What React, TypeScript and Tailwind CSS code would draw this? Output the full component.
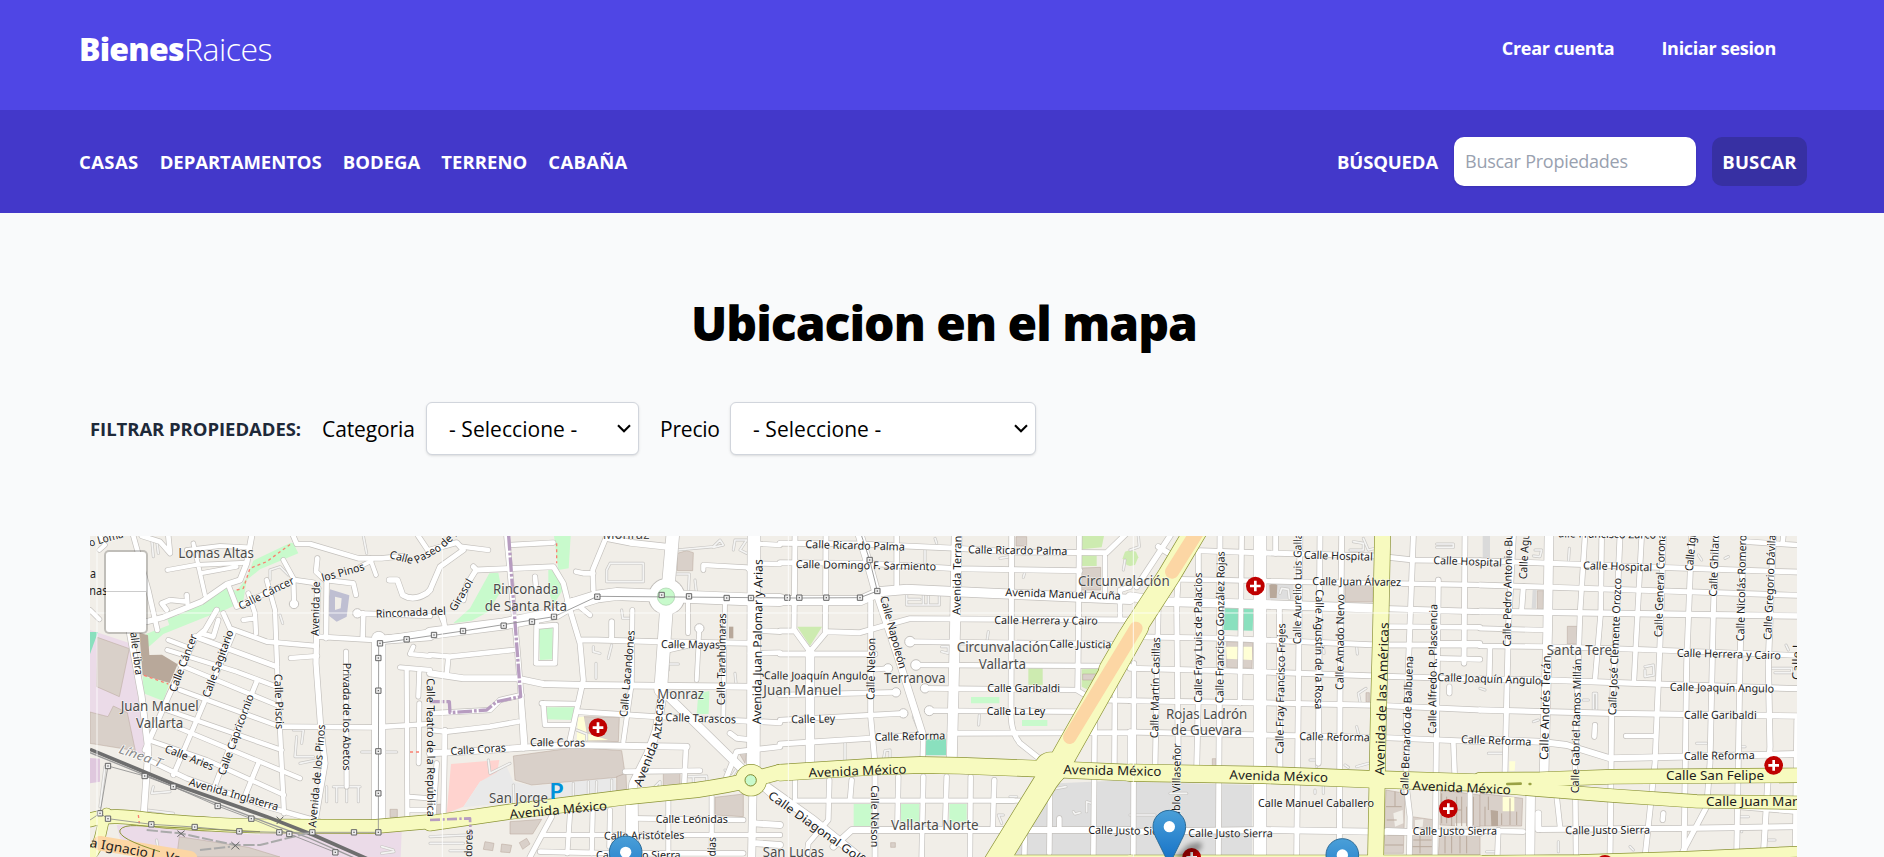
import React from "react";

type Pt = [number, number];
type Shape = { f: string; d: string };
/** text, baseline start x/y, baseline end x/y, font size */
type Label = [string, number, number, number, number, number];
type Tile = {
  areas: Shape[];
  minor: string[];
  roads: [number, string][];
  main: [number, string][];
  poles: Pt[];
  labels: Label[];
  hospitals: Pt[];
};

const PARK = "#c8facc";
const GRASS = "#cdebb0";
const BUILD = "#d9d0c9";
const INDUS = "#ebdbe8";
const PITCH = "#8ae0be";
const GREY = "#dedede";
const SCHOOL = "#ffffd6";
const LAND = "#f1eee8";

const tiles: Tile[] = [
  {
    areas: [
      { f: PARK, d: "M632 38L520 92L500 145L470 182L425 172L385 212L290 258L260 262L268 285L198 312L205 352L250 312L375 262L440 238L490 214L500 150L540 118L655 70L640 40Z" },
      { f: PARK, d: "M188 438L268 460L250 513L190 490Z" },
      { f: "#b8a89a", d: "M178 308L204 316L208 375L246 374L293 403L269 459L188 436Z" },
      { f: INDUS, d: "M30 300L150 340L205 680L165 665L30 630Z" },
      { f: BUILD, d: "M52 322L148 356L118 500L50 470Z" },
      { f: BUILD, d: "M30 546L84 560L100 528L142 548L166 662L30 640Z" },
      { f: PITCH, d: "M30 306L54 306L30 372Z" },
      { f: "#dfc8de", d: "M30 684L60 686L60 755L30 760Z" },
      { f: INDUS, d: "M110 885L550 915L560 981L230 981L120 925Z" },
      { f: INDUS, d: "M540 900L965 905L962 981L540 981Z" },
      { f: BUILD, d: "M298 920L505 952L600 981L290 981Z" },
      { f: "#bfbfd2", d: "M750 178L808 196L800 260L770 275L740 252Z" },
      { f: LAND, d: "M765 200L785 205L782 235L765 240Z" },
      { f: BUILD, d: "M930 838L952 838L952 862L930 862Z" },
    ],
    minor: [
      "M230 30L235 70", "M215 25L220 80", "M850 18L860 70", "M570 150L570 120L600 110L625 135", "M640 600L670 600L665 640", "M660 700L710 690", "M650 620L645 680L700 680",
      "M760 770L840 770M770 770L770 815M800 770L800 815M835 770L835 815M740 770L740 815", "M220 770L215 790L270 785", "M200 840L280 850M210 860L270 850", "M845 666L950 666", "M600 255L608 280", "M230 930L235 960", "M905 950L940 960M905 970L942 965", "M75 710L60 830",
    ],
    roads: [
      [14, "M160 18L205 180L232 300"], [14, "M185 18L240 35L270 70L265 18"], [12, "M60 18L75 45L58 60"], [14, "M640 18L650 42L690 42L835 85L905 85L970 78"], [12, "M870 85L888 135M875 92L840 110"],
      [12, "M262 120L345 105L500 98M340 40L375 195M362 130L470 110M320 60L420 48L500 52"], [16, "M515 18L500 100L480 150L440 163L365 215L250 262L200 275"],
      [14, "M445 165L470 230L645 150L700 158L715 175"], [14, "M260 240L245 220L270 210L320 215M320 195L322 220"], [13, "M30 240L58 268"], [13, "M610 90L640 145L642 215"], [13, "M560 150L585 240L592 430L612 850"],
      [13, "M505 190L525 250L528 310M490 270L525 265"], [14, "M712 85L708 125L735 150L820 160L828 195"], [14, "M740 150L738 325M712 320L880 330L1050 305"], [14, "M850 250L848 325M832 250L1050 258"], [16, "M928 150L952 150L968 195Q1000 215 1040 190L1050 180"], [14, "M1015 18L1050 70"],
      [15, "M410 240L375 300L345 325L265 500L195 660"], [14, "M370 312L400 320L415 270"], [14, "M430 250L450 295L560 335L710 348"], [13, "M632 384L712 378"], [15, "M345 320L590 410"], [13, "M265 330L330 355M262 360L470 425L590 470"],
      [13, "M300 405L590 525M300 480L600 590M260 540L605 660"], [13, "M275 585L660 745M205 630L380 690L612 795"], [14, "M460 310L380 500L280 735"], [14, "M530 455L430 700L400 780M535 700L490 810"],
      [18, "M148 300L185 500L205 660L190 870"], [16, "M712 180L708 400L722 590L735 700L700 905"], [14, "M605 590L880 592L1050 582"], [13, "M798 365L800 770"], [13, "M960 412L1050 420M1018 420L1015 500M1018 520L1016 700M980 420L982 860M982 800L1050 805M985 840L1050 840"],
      [40, "M896 325L896 880"], [26, "M896 330L1050 318"], [14, "M205 690L320 745L560 830L720 875"], [13, "M1000 350L990 372L1050 378"],
    ],
    main: [[40, "M30 870C90 850 170 865 240 872S480 888 550 888L880 890L1050 875"], [30, "M80 850C60 890 70 930 30 981"]],
    poles: [[900, 340], [980, 328], [895, 384], [895, 482], [895, 664], [895, 790], [895, 907], [822, 907], [697, 907], [628, 912], [598, 907], [478, 904], [344, 891], [214, 883], [84, 866], [60, 850], [84, 708], [194, 738], [280, 770], [413, 828], [514, 866], [766, 967]],
    labels: [
      ["o Loma", 30, 50, 132, 22, 33], ["Lomas Altas", 295, 84, 522, 84, 41], ["Calle Cáncer", 482, 240, 645, 160, 33], ["Avenida de", 716, 318, 720, 155, 33], ["los Pinos", 728, 155, 855, 120, 33], ["Calle", 927, 84, 996, 102, 33], ["Paseo", 1010, 102, 1086, 60, 33], ["de la", 1092, 54, 1146, 4, 33],
      ["Rinconada del", 888, 263, 1098, 254, 33], ["a", 30, 145, 48, 145, 38], ["nas", 28, 196, 82, 196, 38], ["alle Libra", 151, 308, 166, 436, 33], ["Calle Cáncer", 288, 488, 352, 318, 33], ["Calle Sagitario", 388, 505, 461, 305, 33],
      ["Calle Capricornio", 434, 738, 522, 498, 33], ["Calle Piscis", 583, 432, 588, 598, 33], ["Privada de los Abetos", 788, 398, 788, 722, 33], ["Juan Manuel", 122, 544, 356, 544, 41], ["Vallarta", 168, 595, 310, 595, 41],
      ["Calle Aries", 252, 665, 396, 722, 33], ["Avenida Inglaterra", 325, 766, 592, 842, 33], ["Avenida de los Pinos", 708, 893, 736, 585, 33], ["Calle Teatro de la República", 1040, 445, 1042, 860, 33], ["a Ignacio L. Va", 28, 950, 300, 1000, 38],
    ],
    hospitals: [],
  },
  {
    areas: [
      { f: PARK, d: "M178 130L205 128L215 180L175 245L125 272L70 280L120 235Z" }, { f: PARK, d: "M372 18L422 18L416 115L385 120Z" }, { f: PARK, d: "M355 115L380 118L398 180L370 225L355 180Z" },
      { f: PARK, d: "M325 292L368 290L368 388L330 390Z" }, { f: PARK, d: "M350 532L433 532L425 570L350 568Z" }, { f: PARK, d: "M805 490L838 483L836 552L800 552Z" },
      { f: BUILD, d: "M742 70L770 62L790 68L788 122L742 122Z" }, { f: "#ffd3cf", d: "M63 702L208 690L200 735L150 755L100 830L50 850Z" }, { f: "#e9e9e9", d: "M150 755L230 710L250 755L310 768L555 742L560 785L100 832Z" },
      { f: BUILD, d: "M250 678L440 652L575 662L585 730L560 742L305 765L255 750Z" }, { f: BUILD, d: "M462 560L568 562L565 635L465 632Z" }, { f: SCHOOL, d: "M444 562L462 560L470 610L535 630L440 632Z" }, { f: BUILD, d: "M700 718L750 718L750 772L700 772Z" },
      { f: BUILD, d: "M240 875L335 868L308 912L240 912Z" }, { f: BUILD, d: "M855 802L940 792L940 860L855 855Z" }, { f: BUILD, d: "M925 665L950 665L945 700Z" }, { f: "#b8a89a", d: "M897 290L910 290L910 325L897 325Z" },
      { f: BUILD, d: "M165 935L192 940L188 962L160 958ZM215 942L245 946L240 968L212 966ZM268 938L290 925L300 942L278 958Z" }, { f: BUILD, d: "M560 740L588 730L590 785L560 790Z" }, { f: BUILD, d: "M0 825L42 822L45 850L0 855Z" },
    ],
    minor: [
      "M540 100L640 100L640 155L530 155L530 120L540 100", "M740 60L850 50L870 30L880 45L850 52", "M910 60L915 30L950 30L930 60L950 70", "M575 240L578 265L605 265", "M740 132L778 132L775 195", "M795 150L800 195L830 195", "M490 350L490 365L510 370M545 345L535 385M498 400L498 445", "M715 402L745 402M915 430L918 460M715 390L715 420",
      "M175 690L180 730L240 700", "M430 760L430 820M475 755L475 815M500 755L498 815M545 750L545 812M250 765L252 835", "M775 740L830 738L832 770M790 740L790 770", "M0 920L110 915M0 940L100 940M60 962L110 962", "M675 770L690 755L690 790", "M440 600L470 612L470 630", "M885 720L905 740L918 720",
    ],
    roads: [
      [15, "M0 180L30 110L100 60L80 38L0 60"], [13, "M95 50L175 60"], [14, "M240 45L370 38"], [15, "M130 110L140 120L370 110L400 160L420 240L450 340L460 450L420 630"], [15, "M135 125L110 165L100 210"], [14, "M315 140L318 170"], [15, "M230 18L262 360L285 640"],
      [14, "M530 18L488 120L490 180"], [14, "M438 125L460 130L490 130"], [18, "M535 25L600 38L710 50"], [38, "M728 18L712 200L692 480"], [36, "M420 225L500 200L560 192L950 208L1050 210"], [34, "M0 310L220 282L380 250L430 220"],
      [14, "M452 232L480 255"], [13, "M820 120L820 105L950 112L970 130M960 40L1050 45M960 100L1050 102"], [38, "M972 18L970 720"], [22, "M970 720L965 981"], [13, "M30 250L50 300M40 260L45 290"], [14, "M320 270L318 400L375 400L378 285M320 290L375 285"],
      [14, "M0 375L60 380L250 360M55 380L50 435"], [18, "M0 430L100 445L260 445L340 462L460 465L960 470"], [15, "M455 330L500 330L690 335L960 340M545 275L545 330"], [13, "M607 240L605 460L580 635"], [12, "M774 215L774 310M808 295L800 450M885 215L880 560"], [14, "M695 365L780 345M960 300L1050 305M960 370L1050 368"],
      [14, "M0 550L180 540L210 510L275 495"], [14, "M50 605L180 590L265 575M340 520L345 585L430 585M335 520L445 522"], [14, "M0 600L50 605"], [15, "M445 545L680 560L1050 578"], [18, "M0 670L100 665L250 655L410 645L770 650"], [24, "M700 480L680 600L655 670L610 760L605 800"], [24, "M715 500L960 740"], [15, "M900 610L920 625L970 630M1050 650L920 665L890 740"], [14, "M768 650L762 780"],
      [14, "M585 725L810 722"], [14, "M280 655L272 500"], [36, "M605 795L607 981"], [14, "M607 865L940 870M340 915L1050 915M330 965L560 970M610 970L940 970"], [15, "M365 860L300 981"], [13, "M420 850L412 970M488 845L485 970M540 840L538 950M715 800L715 970M845 800L845 970"], [14, "M20 700L10 860M45 600L40 860"], [18, "M970 880L1050 885M980 940L1050 945"], [20, "M1000 770L1050 815"],
    ],
    main: [[44, "M0 880L240 845L600 800L800 780Q900 765 960 750L1050 726"], [92, "M963 750L963 751"]],
    poles: [[12, 315], [99, 303], [221, 287], [306, 275], [372, 260], [502, 200], [695, 195], [777, 199], [890, 204], [963, 204]],
    labels: [
      ["Girasol", 76, 246, 130, 155, 33], ["Monraz", 518, 26, 658, 26, 41], ["Rinconada", 189, 192, 385, 192, 41], ["de Santa Rita", 164, 243, 411, 243, 41], ["Calle Mayas", 693, 354, 870, 356, 33],
      ["Calle Lacandones", 592, 562, 614, 302, 33], ["Calle Tarahumaras", 884, 526, 888, 250, 33], ["Avenida Juan Palomar y Arias", 993, 583, 998, 88, 36], ["Monraz", 682, 506, 822, 506, 41], ["Calle Tarascos", 706, 573, 918, 580, 33],
      ["Avenida", 634, 772, 686, 640, 36], ["Aztecas", 692, 628, 702, 506, 36], ["Calle Coras", 62, 675, 228, 664, 33], ["Calle Coras", 300, 648, 465, 650, 33], ["San Jorge", 177, 818, 354, 818, 41], ["Avenida México", 240, 866, 532, 840, 38], ["Calle Leónidas", 677, 880, 894, 880, 33],
      ["Calle Aristóteles", 522, 929, 763, 927, 33], ["Calle Justo Sierra", 498, 986, 752, 986, 33], ["dores", 126, 981, 128, 900, 33], ["idias", 856, 987, 858, 922, 33], ["Calle Diagonal Golf", 1012, 802, 1290, 1000, 35], ["Calle Joaquín Angulo", 1002, 448, 1314, 449, 33], ["Juan Manuel", 1000, 495, 1234, 495, 41], ["San Lucas", 998, 982, 1182, 982, 41],
    ],
    hospitals: [[504, 593]],
  },
  {
    areas: [
      { f: GRASS, d: "M52 290L126 290L90 348Z" }, { f: GRASS, d: "M905 18L972 18L965 52L905 58ZM905 76L950 76L950 108L905 108Z" }, { f: GRASS, d: "M1050 60L1035 65L1028 85L1040 105L1050 108Z" }, { f: GRASS, d: "M745 415L788 415L788 465L745 465ZM905 418L962 416L920 478L905 470Z" },
      { f: PITCH, d: "M437 628L498 626L498 676L437 676Z" }, { f: PARK, d: "M573 501L658 501L658 520L573 520ZM726 570L802 570L802 588L726 588Z" }, { f: PARK, d: "M221 822L275 822L275 888L221 888ZM363 822L418 822L418 875L363 875ZM508 822L560 822L560 875L508 875Z" },
      { f: BUILD, d: "M708 20L740 20L740 48L708 48ZM905 114L962 112L962 180L905 180ZM908 432L955 432L945 450L908 450ZM332 938L346 938L346 952L332 952Z" }, { f: GREY, d: "M835 760L1050 750L1050 981L690 981Z" }, { f: BUILD, d: "M975 470L992 455L992 500L970 500Z" },
    ],
    minor: ["M380 195L380 225L478 225L478 195M380 208L420 208M430 195L430 225M445 195L445 225", "M435 60L435 110L450 115", "M465 25L470 40", "M735 125L730 142", "M660 85L690 80", "M625 305L620 340", "M485 350L505 350L505 370L485 365", "M598 555L596 585", "M195 640L195 690", "M310 690L315 662L330 660L330 690", "M805 780L858 770M880 845L885 852L900 848M920 845L920 815L935 820", "M665 880L655 855L670 855", "M690 800L710 800", "M400 560L412 590", "M1030 120L1035 90"],
    roads: [
      [15, "M0 40L240 42L530 55L700 66L980 68L1050 0"], [15, "M0 98L260 100L530 116L900 122"], [28, "M0 212L240 212L300 185L380 178L640 190L1050 208"], [15, "M0 303L45 303L90 365L140 305L240 308L320 285L390 266L1050 270"], [15, "M0 372L285 372"], [14, "M395 335L1000 342"], [14, "M408 405L1050 408"], [14, "M430 475L890 480L940 510L1050 512"], [14, "M450 542L890 545"], [15, "M510 610L1050 608"], [13, "M285 418L325 415"],
      [14, "M0 495L345 487"], [14, "M0 570L370 550"], [15, "M0 642L270 625L430 615"], [15, "M45 18L42 300M138 18L136 305"], [26, "M90 365L90 695"], [24, "M240 18L262 90L290 190"], [20, "M290 190L360 400L430 620"], [15, "M272 215L272 560L285 700L285 981"], [14, "M350 18L350 175"], [30, "M530 18L525 300L515 700"], [15, "M695 18L693 560Q695 610 720 640L790 695"], [15, "M898 18L894 420L893 475"], [14, "M945 500L940 981"], [14, "M1005 460L1003 720M880 660L875 730"], [14, "M975 80L975 200M1020 270L1020 180L1050 170"],
      [14, "M430 615L428 690"], [13, "M45 750L45 812L720 812"], [14, "M148 750L145 870L85 940L80 981"], [14, "M215 750L210 810M355 740L352 900M430 740L425 981M500 740L495 900M572 740L570 981M643 750L638 900"], [18, "M160 950L215 900L640 900L1050 900"], [24, "M-40 770L100 870L260 1000"], [14, "M810 780L808 970M735 900L733 981M640 812L700 812M838 865L838 900"],
    ],
    main: [[48, "M0 728L280 710L420 705L540 707L820 718L1050 728"], [70, "M1070 290L845 690L800 750L640 1010"], [28, "M640 990L1050 990"]],
    poles: [[22, 203], [58, 203], [139, 203], [240, 203], [292, 183], [269, 90]],
    labels: [
      ["Calle Ricardo Palma", 76, 54, 374, 62, 33], ["Calle Domingo F. Sarmiento", 47, 114, 468, 121, 33], ["Avenida Terranov", 541, 255, 545, -20, 33], ["Calle Ricardo Palma", 564, 70, 862, 75, 33], ["Avenida Manuel Acuña", 676, 198, 1022, 209, 33], ["Circunvalación", 894, 168, 1169, 168, 41],
      ["Calle Herrera y Cairo", 643, 282, 953, 284, 33], ["Calle Napoleón", 300, 202, 358, 418, 33], ["Calle Nelson", 283, 510, 286, 324, 33], ["Circunvalación", 530, 367, 805, 367, 41], ["Vallarta", 596, 418, 738, 418, 41], ["Calle Justicia", 808, 353, 994, 355, 33],
      ["Terranova", 312, 459, 497, 459, 41], ["Calle Garibaldi", 622, 487, 840, 487, 33], ["Calle La Ley", 620, 556, 796, 556, 33], ["Calle Ley", 34, 580, 166, 577, 33], ["Calle Reforma", 284, 633, 496, 628, 33], ["Avenida México", 86, 742, 380, 730, 38], ["Avenida México", 850, 732, 1144, 738, 38],
      ["Calle Nelson", 273, 766, 273, 952, 33], ["Vallarta Norte", 333, 901, 596, 901, 41], ["Calle Justo Sierra", 925, 911, 1178, 916, 33],
    ],
    hospitals: [],
  },
  {
    areas: [
      { f: GRASS, d: "M0 60L18 65L25 82L15 105L0 108Z" }, { f: PITCH, d: "M285 234L370 236L368 302L280 300Z" }, { f: BUILD, d: "M290 335L368 338L366 415L290 412Z" }, { f: SCHOOL, d: "M288 350L366 350L366 390L290 386Z" }, { f: GREY, d: "M412 156L490 156L490 208L412 208Z" }, { f: "#b8a89a", d: "M418 165L430 158L442 165L440 204L420 204Z" },
      { f: BUILD, d: "M645 164L730 164L728 216L645 216Z" }, { f: GREY, d: "M0 755L367 765L366 981L0 981Z" }, { f: BUILD, d: "M768 780L825 790L820 970L760 970ZM845 860L915 870L908 975L840 975ZM932 780L1050 795L1050 890L930 885ZM930 905L1050 905L1050 975L925 975Z" }, { f: LAND, d: "M790 850L818 840L820 880L795 890ZM855 870L880 868L878 890L855 892ZM975 880L1010 880L1010 900L975 900Z" }, { f: BUILD, d: "M247 686L258 686L258 710L247 710ZM708 488L718 488L718 516L708 516Z" },
    ],
    minor: ["M660 60L700 60L700 40L670 35M700 25L715 60L735 55", "M920 42L970 42L970 52L920 52", "M450 190L455 175L475 178L478 205", "M680 350L682 372M580 345L582 370", "M540 690L560 690L560 710M680 590L685 610M645 705L655 712M680 710L715 700", "M555 780L555 790M580 765L580 790", "M0 855L75 855", "M120 790L170 790", "M685 490L690 516M708 475L685 490", "M25 18L28 50L0 60"],
    roads: [
      [16, "M120 18L20 170M85 50L140 85"], [15, "M210 62L440 70L740 78L850 90L1050 92"], [14, "M150 148L270 150L480 155L1050 165"], [26, "M0 200L110 215L460 225L740 235"], [16, "M740 235L1050 245"], [15, "M0 320L280 325L740 345L1050 345"], [15, "M0 415L280 422L740 438L1050 448"], [15, "M0 512L380 518L740 526L1050 540"], [15, "M0 606L400 615L740 622L1050 635"],
      [14, "M780 290L1050 292M925 385L1050 388M925 340L1050 340"], [14, "M85 235L75 730"], [15, "M148 90L140 220L145 700"], [15, "M205 65L205 500L200 720"], [15, "M270 18L268 500L265 981"], [14, "M335 18L330 500M330 420L330 520"], [38, "M390 18L390 981"], [15, "M448 230L450 725M437 18L437 70"], [15, "M510 18L505 500L500 981"], [15, "M570 18L565 700"], [15, "M635 18L630 500L628 981"], [15, "M850 18L840 280L828 600L828 760L840 860L838 981"], [15, "M925 150L915 981"], [15, "M1005 18L1002 400"], [14, "M970 635L975 760"],
      [14, "M958 470L958 490"], [18, "M0 905L400 900L740 905L1050 908"], [14, "M12 400L10 981"], [14, "M0 605L0 700"], [14, "M1020 760L1020 905"], [16, "M770 902L840 905"],
    ],
    main: [[50, "M0 728L400 735L730 748L1050 758"], [46, "M758 0L752 300L745 560L737 981"], [66, "M210 -20L118 135L-5 325L-60 420"], [28, "M0 990L1050 990"]],
    poles: [],
    labels: [
      ["Calle Martín Casillas", 84, 625, 90, 322, 33], ["Calle Fray Luis de Palacios", 215, 518, 215, 128, 33], ["Calle Francisco González Rojas", 280, 520, 284, 64, 33], ["Calle Aurelio Luis Galla", 513, 343, 515, 10, 33], ["Calle Hospital", 521, 86, 728, 92, 33], ["Calle Hospital", 910, 102, 1115, 110, 33], ["Calle Juan Álvarez", 547, 165, 813, 168, 33],
      ["Calle Agustín de la Rosa", 557, 178, 555, 538, 33], ["Calle Amado Nervo", 640, 480, 643, 192, 33], ["Calle Fray Francisco Frejes", 460, 672, 466, 280, 33], ["Avenida de las Américas", 762, 736, 776, 278, 38], ["Calle Alfredo R. Plascencia", 918, 612, 922, 222, 33], ["Calle Bernardo de Balbuena", 834, 798, 850, 378, 33], ["Calle Joaquín Angulo", 922, 453, 1234, 463, 33],
      ["Rojas Ladrón", 108, 566, 352, 566, 41], ["de Guevara", 123, 616, 336, 616, 41], ["Calle Reforma", 508, 630, 719, 634, 33], ["Calle Reforma", 993, 639, 1204, 647, 33], ["Avenida México", 298, 748, 594, 756, 38], ["Calle Manuel Caballero", 384, 832, 732, 832, 33], ["Pablo Villaseñor", 150, 880, 152, 640, 33], ["Calle Justo Sierra", 175, 921, 428, 922, 33], ["Avenida México", 847, 780, 1142, 793, 38], ["Calle Justo Sierra", 848, 915, 1101, 914, 33],
    ],
    hospitals: [[376, 168], [955, 836], [185, 982]],
  },
  {
    areas: [{ f: BUILD, d: "M262 289L292 289L290 342L262 342ZM172 182L190 182L190 238L172 238Z" }, { f: BUILD, d: "M0 790L128 805L125 888L0 888Z" }, { f: SCHOOL, d: "M68 800L103 802L103 844L68 844ZM88 694L106 694L104 722L88 722Z" }, { f: "#b8a89a", d: "M32 840L54 843L54 888L34 888Z" }, { f: "#dadada", d: "M8 18L30 18L30 84L8 84ZM158 180L170 180L168 235L155 235Z" }],
    minor: ["M268 55L265 100", "M165 60L185 60L180 80L160 78", "M495 410L520 405L522 435L495 440L495 420", "M340 490L350 490L350 540L340 540L340 490", "M310 510L325 510", "M875 415L935 415L935 428L885 428", "M918 345L925 360", "M650 640L680 640M780 650L795 650", "M770 860L805 860M785 890L785 905M865 930L885 930", "M235 935L235 965M450 950L460 960", "M160 575L175 570", "M20 965L45 965M25 670L75 670", "M655 75L665 90M735 85L745 80", "M0 475L15 480"],
    roads: [
      [15, "M0 92L210 100L530 112L950 126"], [15, "M0 165L215 172L530 182L950 196"], [17, "M0 244L950 258"], [13, "M0 295L190 300"], [14, "M0 348L200 350L470 358L950 376"], [16, "M0 447L200 450L470 460L950 476"], [16, "M0 540L400 550L950 558"], [18, "M0 628L180 635L260 645L390 685L950 672"], [16, "M180 898L600 895L950 890"], [14, "M30 350L28 445"],
      [15, "M100 18L85 300L75 725"], [15, "M130 170L125 240"], [26, "M207 18L203 300L192 740"], [26, "M152 790L150 981"], [14, "M315 18L300 250L285 700L288 981"], [14, "M365 18L362 250L345 450"], [15, "M420 18L410 250L395 560L390 981"], [14, "M485 18L470 300L462 450"], [15, "M550 18L540 340L525 700L495 981"], [15, "M635 18L620 400L612 981"], [15, "M708 18L700 250L690 700L680 830L600 981"], [15, "M790 18L780 400L770 981"], [16, "M880 18L865 400L870 650L850 981"], [14, "M950 570L945 981M910 18L908 40M800 35L950 45"],
      [14, "M345 585L343 620M438 618L520 618"], [14, "M550 850L548 870"], [14, "M55 900L52 981M230 800L240 890"], [14, "M770 830L950 845"], [18, "M175 898L175 850"], [14, "M0 902L130 905"],
    ],
    main: [[42, "M0 749L180 748L400 740L950 736"], [38, "M0 765L180 780L400 797L560 808L650 814L950 818"], [30, "M0 992L300 990L620 980L950 965"]],
    poles: [],
    labels: [
      ["Calle Pedro Antonio Bu", 92, 350, 97, 10, 33], ["Calle Agu", 140, 148, 148, 10, 33], ["alle Francisco Zarco", 235, 22, 528, 26, 33], ["Calle Hospital", 309, 118, 516, 124, 33], ["Calle General Corona", 546, 322, 556, 10, 33], ["Calle Igna", 638, 124, 650, -12, 33], ["Calle Ghilardi", 710, 200, 718, -2, 33], ["Calle Nicolás Romero", 792, 334, 799, 14, 33], ["Calle Gregorio Dávila", 874, 330, 887, 14, 33],
      ["Calle José Clemente Orozco", 408, 556, 424, 144, 33], ["Santa Tere", 200, 374, 396, 374, 41], ["Calle Andrés Terán", 204, 690, 212, 376, 36], ["Calle Gabriel Ramos Millán", 296, 790, 304, 386, 33], ["Calle Herrera y Cairo", 590, 380, 902, 388, 33], ["Calle Joaquín Angulo", 569, 482, 882, 488, 33], ["Calle Garibaldi", 612, 566, 830, 567, 33],
      ["Calle Reforma", 612, 690, 824, 687, 33], ["Calle San Felipe", 558, 751, 852, 751, 38], ["Calle Juan Manuel", 678, 828, 1020, 828, 38], ["Calle Justo Sierra", 256, 913, 510, 911, 33], ["Calle L", 960, 450, 962, 335, 33],
    ],
    hospitals: [[881, 706], [375, 1003]],
  },
];

const TILE_WIDTH = 1050;
const at = (i: number) => `translate(${i * TILE_WIDTH} 0)`;

function StreetLabel({ l }: { l: Label }) {
  const [text, x1, y1, x2, y2, size] = l;
  const angle = (Math.atan2(y2 - y1, x2 - x1) * 180) / Math.PI;
  return (
    <text
      transform={`translate(${x1} ${y1}) rotate(${angle})`}
      fontSize={size}
      textLength={Math.hypot(x2 - x1, y2 - y1)}
      lengthAdjust="spacingAndGlyphs"
      fill={size === 41 ? "#4c4c4a" : "#1c1c1c"}
      stroke="#ffffff"
      strokeOpacity={0.6}
      strokeWidth={size === 38 ? 0 : 4}
      paintOrder="stroke"
    >
      {text}
    </text>
  );
}

function Hospital({ p }: { p: Pt }) {
  return (
    <g transform={`translate(${p[0]} ${p[1]})`}>
      <circle r="28" fill="#bf0000" />
      <path d="M0 -16V16M-16 0H16" stroke="#fff" strokeWidth="8" />
    </g>
  );
}

function Pin({ x, y }: { x: number; y: number }) {
  return (
    <g transform={`translate(${x} ${y})`}>
      <path d="M0 160L55 105Q110 85 95 115Q80 140 0 166Z" fill="#000" opacity="0.35" filter="url(#soft)" />
      <path d="M0 1C28 1 49 23 49 50C49 66 43 77 36 91L0 164L-36 91C-43 77 -49 66 -49 50C-49 23 -28 1 0 1Z" fill="url(#pin)" stroke="#2e6c97" strokeWidth="3" />
      <circle cy="50" r="17" fill="#fff" />
    </g>
  );
}

const T = tiles.map((t, i) => ({ ...t, i }));

function CityMap() {
  return (
    <svg className="block h-[321px] w-full font-['Noto_Sans',sans-serif]" viewBox="30 18 5121 963" preserveAspectRatio="none" fill="none" strokeLinejoin="round">
      <defs>
        <linearGradient id="pin" x1="0" y1="0" x2="0" y2="1">
          <stop offset="0" stopColor="#4a9fd8" />
          <stop offset="1" stopColor="#126fc6" />
        </linearGradient>
        <filter id="soft" x="-50%" y="-50%" width="200%" height="200%">
          <feGaussianBlur stdDeviation="8" />
        </filter>
      </defs>
      <rect x="0" y="0" width="5200" height="1000" fill={LAND} />
      {T.map(t => <g key={t.i} transform={at(t.i)}>{t.areas.map((a, k) => <path key={k} d={a.d} fill={a.f} stroke="#b9a99c" strokeOpacity={a.f === BUILD ? 0.8 : 0} strokeWidth="2" />)}</g>)}
      <path d="M3918 830H3965M3920 870H3950M3922 915H3970M3915 945H3970M3945 785V830M4000 930H4055M3995 950H4060M4020 910V970M4085 790V880M4100 800V880M4115 810V888M4130 800V888M4145 800V888M4160 830V888M4180 800V885M4215 830V888M4225 800V840M4290 805V885M4310 845V885M4265 850V885M4083 840H4145M4095 910V970M4115 910V970M4140 910V970M4160 910V970" stroke="#b9a99c" strokeWidth="3" />
      {T.map(t => <g key={t.i} transform={at(t.i)} strokeLinecap="round">{t.minor.map((d, k) => <g key={k}><path d={d} stroke="#c9c7c4" strokeWidth="9" /><path d={d} stroke="#f4f4f3" strokeWidth="5" /></g>)}</g>)}
      {T.map(t => <g key={t.i} transform={at(t.i)} stroke="#c4c1bd" strokeLinecap="round">{t.roads.map(([w, d], k) => <path key={k} d={d} strokeWidth={w + 4} />)}</g>)}
      <circle cx="1760" cy="200" r="54" stroke="#c4c1bd" strokeWidth="4" />
      <g fill="#fff" stroke="#c4c1bd" strokeWidth="3">
        <circle cx="2424" cy="415" r="14" /><circle cx="2448" cy="487" r="14" /><circle cx="2470" cy="550" r="14" /><circle cx="2490" cy="335" r="16" /><circle cx="2508" cy="405" r="16" /><circle cx="2535" cy="475" r="14" /><circle cx="2548" cy="542" r="15" /><circle cx="642" cy="222" r="14" /><circle cx="832" cy="250" r="14" /><circle cx="1858" cy="295" r="14" />
      </g>
      {T.map(t => <g key={t.i} transform={at(t.i)} stroke="#fff" strokeLinecap="round">{t.roads.map(([w, d], k) => <path key={k} d={d} strokeWidth={w} />)}</g>)}
      <circle cx="1760" cy="200" r="53" fill="#fff" />
      <circle cx="1758" cy="200" r="26" fill="#c8facc" stroke="#a5cfa8" strokeWidth="2" />

      {T.map(t => <g key={t.i} transform={at(t.i)} stroke="#8c9436" strokeLinecap="round">{t.main.map(([w, d], k) => <path key={k} d={d} strokeWidth={w + 4} />)}</g>)}
      <circle cx="2912" cy="715" r="50" fill="#8c9436" />
      {T.map(t => <g key={t.i} transform={at(t.i)} stroke="#f7fabf" strokeLinecap="round">{t.main.map(([w, d], k) => <path key={k} d={d} strokeWidth={w} />)}</g>)}
      <circle cx="2912" cy="715" r="48" fill="#f7fabf" />
      <circle cx="2012" cy="751" r="17" fill="#c8facc" stroke="#7f8a33" strokeWidth="3" />
      <g stroke="#fcd6a4" strokeLinecap="round">
        <path d="M3355 0L3276 125" strokeWidth="42" />
        <path d="M3168 295L2969 622" strokeWidth="40" />
        <path d="M60 940L180 960L330 985" strokeWidth="44" />
      </g>
      <path d="M120 900Q130 885 170 887L540 905M120 900Q110 925 240 965" stroke="#8c9436" strokeWidth="3" />
      <path d="M4282 762L4322 761M4349 762L4351 762" stroke="#9aa245" strokeWidth="8" strokeLinecap="round" />

      <path d="M1286 18L1312 370L1322 500L1250 515L1220 540L1110 548L1108 515L1050 515" stroke="#b79cc0" strokeWidth="10" strokeDasharray="44 6 8 6" />
      <path d="M1050 870L1170 865L1172 920" stroke="#b79cc0" strokeWidth="8" strokeDasharray="30 7 7 7" />
      <path d="M470 180L490 175L510 115L560 95L632 42M192 436L265 462M990 666L1025 666M1430 40L1430 100M175 855L178 880" stroke="#fa8072" strokeWidth="4" strokeDasharray="9 9" />
      <path d="M30 658L280 762L560 860L700 915L870 990" stroke="#6e6e6e" strokeWidth="11" />
      <path d="M30 668L300 778L560 878L690 925L860 1000" stroke="#9b9b9b" strokeWidth="4" />
      <path d="M200 900L300 910L465 945L540 945L600 930L690 908M360 960L450 950" stroke="#aaa" strokeWidth="6" strokeDasharray="34 8" />
      <path d="M292 902L314 920M314 902L292 920M454 936L478 958M478 936L454 958M590 860L610 882M610 860L590 882" stroke="#666" strokeWidth="3" />
      <g stroke="#8d8d8d" strokeWidth="2.5">
        <path d="M895 907L896 340L980 328L1149 303L1422 260L1552 199L2150 204L2340 203L2392 183L2369 90L2345 18" />
        <path d="M60 850L84 866L214 883L344 891L478 904L598 907L895 907M30 870L60 850L84 708L194 738L280 770L413 828L514 866L628 912L766 967" />
      </g>
      {T.map(t => <g key={t.i} transform={at(t.i)}>{t.poles.map(([x, y], k) => <g key={k}><rect x={x - 8} y={y - 8} width="16" height="16" fill="#eee" stroke="#666" strokeWidth="3" /><rect x={x - 2} y={y - 2} width="4" height="4" fill="#666" /></g>)}</g>)}

      <path d="M0 249H5200M51 0V1000M1087 0V1000M2125 0V1000M3160 0V1000" stroke="#fff" strokeWidth="3" opacity="0.8" />

      {T.map(t => <g key={t.i} transform={at(t.i)}>{t.labels.map((l, k) => <StreetLabel key={k} l={l} />)}</g>)}
      <text transform="translate(114 668) rotate(19)" fontSize="37" textLength="135" lengthAdjust="spacingAndGlyphs" fontStyle="italic" fill="#8a8a8a" stroke="#fff" strokeWidth="4" paintOrder="stroke">Línea T</text>
      <text x="1408" y="806" fontSize="64" textLength="44" lengthAdjust="spacingAndGlyphs" fontWeight="600" fill="#0092da">P</text>
      {T.map(t => <g key={t.i} transform={at(t.i)}>{t.hospitals.map((p, k) => <Hospital key={k} p={p} />)}</g>)}
      <Pin x={1637} y={917} />
      <Pin x={3268} y={840} />
      <Pin x={3787} y={925} />
    </svg>
  );
}

function Chevron() {
  return (
    <svg className="h-[9px] w-[14px]" viewBox="0 0 14 9" fill="none" stroke="#000" strokeWidth="2.1">
      <path d="M1 1.2L7 7.2L13 1.2" />
    </svg>
  );
}

function Picker({ label, labelClass, boxClass }: { label: string; labelClass: string; boxClass: string }) {
  return (
    <label className="flex items-center text-[21px] text-black">
      <span className={`pt-[2px] ${labelClass}`}>{label}</span>
      <button className={`flex h-[53px] items-center justify-between rounded-md border border-gray-300 bg-white pr-[7px] pl-[22px] shadow ${boxClass}`}>
        <span className="pt-[2px] tracking-[0.05px] whitespace-pre">- Seleccione -</span>
        <span className="pb-[1px]"><Chevron /></span>
      </button>
    </label>
  );
}

export default function App() {
  return (
    <div className="h-[857px] overflow-hidden bg-gray-50 font-['Open_Sans','Noto_Sans',sans-serif]">
      <header className="flex h-[110px] justify-between bg-[#4f46e5] pr-[108px] pl-[79px] text-white">
        <h1 className="flex h-[98px] items-center text-[32px] leading-none whitespace-nowrap">
          <span className="w-[105px] font-black tracking-[-0.8px]">Bienes</span>
          <span className="font-[350] tracking-[-0.5px]">Raices</span>
        </h1>
        <nav className="flex h-[96px] items-center gap-[47px] text-[18px] font-bold tracking-[-0.3px]">
          <a>Crear cuenta</a>
          <a>Iniciar sesion</a>
        </nav>
      </header>

      <div className="flex h-[103px] items-center justify-between bg-[#4338ca] pr-[77px] pl-[79px] text-[18.5px] font-bold text-white">
        <nav className="flex gap-[21px]">
          <a className="tracking-[0.4px]">CASAS</a>
          <a className="tracking-[-0.05px]">DEPARTAMENTOS</a>
          <a className="tracking-[0.05px]">BODEGA</a>
          <a className="tracking-[0.05px]">TERRENO</a>
          <a className="tracking-[0.3px]">CABAÑA</a>
        </nav>
        <form className="flex items-center gap-4">
          <span className="tracking-[-0.15px]">BÚSQUEDA</span>
          <div className="flex h-[49px] w-[242px] items-center rounded-[10px] bg-white px-[11px] text-[18px] font-normal tracking-[-0.25px] text-gray-400 shadow-sm">Buscar Propiedades</div>
          <button type="button" className="h-[49px] w-[95px] rounded-[10px] bg-[#3730a3] tracking-[0.15px]">BUSCAR</button>
        </form>
      </div>

      <main className="pt-[77px] pr-[87px] pl-[90px]">
        <h2 className="h-[66px] pl-[1px] text-center text-[48px] leading-[66px] font-black tracking-[-1px] text-black">Ubicacion en el mapa</h2>
        <div className="mt-[46px] flex h-[53px] items-center">
          <h3 className="w-[232px] text-[18.5px] font-bold tracking-[-0.05px] text-gray-800">FILTRAR PROPIEDADES:</h3>
          <Picker label="Categoria" labelClass="w-[104px] tracking-[-0.1px]" boxClass="w-[213px]" />
          <Picker label="Precio" labelClass="ml-[21px] w-[70px] tracking-[-0.2px]" boxClass="w-[306px]" />
        </div>
        <div className="relative mt-[81px] overflow-hidden">
          <CityMap />
          <div className="absolute top-[14px] left-[14px] flex h-[84px] w-[44px] flex-col overflow-hidden rounded-[5px] border-2 border-black/20 bg-white bg-clip-padding">
            <span className="h-[40px] border-b border-[#ccc]" />
          </div>
        </div>
      </main>
    </div>
  );
}
